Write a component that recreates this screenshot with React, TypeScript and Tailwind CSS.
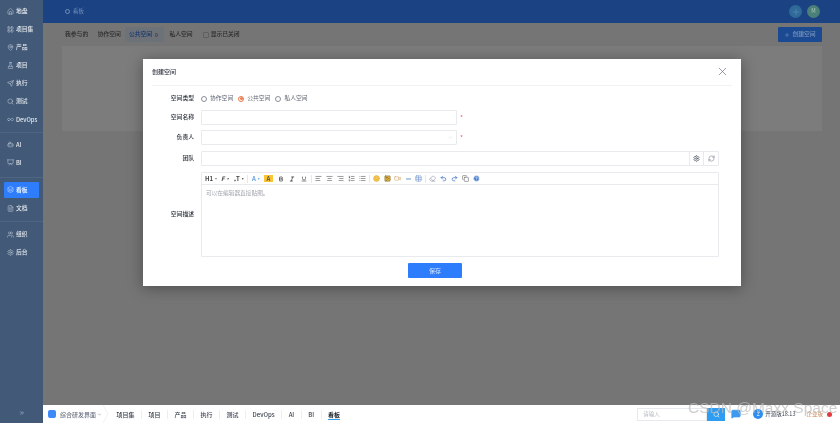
import React from "react";
import {
  Home, LayoutGrid, MapPin, FlaskConical, Send, Search, Infinity as InfinityIcon, Bot, Presentation, Layers, FileText, Users, Settings, ChevronsRight, Plus, X, RefreshCw, ChevronDown,
  AlignLeft, AlignCenter, AlignRight, ListOrdered, List, Smile, Image, Video, Minus, Table, Eraser, Undo2, Redo2, Copy, HelpCircle, Bold, Italic, Underline, MessageSquare,
} from "lucide-react";

const navGroups: { cls: string; items: [any, string][] }[] = [
  { cls: "pt-[3px] pb-[4px]", items: [[Home, "地盘"], [LayoutGrid, "项目集"], [MapPin, "产品"], [FlaskConical, "项目"], [Send, "执行"], [Search, "测试"], [InfinityIcon, "DevOps"]] },
  { cls: "border-t border-[#4f6683] pt-[4px] pb-[6px]", items: [[Bot, "AI"], [Presentation, "BI"]] },
  { cls: "border-t border-[#4f6683] pt-[4px] pb-[5px]", items: [[Layers, "看板"], [FileText, "文档"]] },
  { cls: "border-t border-[#4f6683] pt-[4px] pb-[5px]", items: [[Users, "组织"], [Settings, "后台"]] },
];

function Sidebar() {
  return (
    <aside className="flex w-[43px] shrink-0 flex-col bg-[#425a78] text-[#e4e9ef]">
      {navGroups.map((group, i) => (
        <div key={i} className={`flex flex-col gap-[2.15px] px-[4px] ${group.cls}`}>
          {group.items.map(([Icon, label]) => (
            <div key={label} className={`flex h-[16px] items-center gap-[2px] rounded-[1px] pl-[3px] text-[5.8px] font-medium ${label === "看板" ? "bg-[#2e7dfc] text-white" : ""}`}>
              <Icon size={7} strokeWidth={1.4} className="shrink-0" />
              <span className="whitespace-nowrap">{label}</span>
            </div>
          ))}
        </div>
      ))}
      <div className="mt-auto flex h-[20px] items-center justify-center text-[#c8d2de]">
        <ChevronsRight size={6} />
      </div>
    </aside>
  );
}

function TopArea() {
  return (
    <div className="flex min-h-0 flex-1 flex-col bg-[#757575]">
      <header className="flex h-[23px] shrink-0 items-center justify-between bg-[#1b4383] pl-[22px] pr-[20px] text-[5.5px] text-[#6f8fb8]">
        <span className="flex items-center gap-[3px]"><span className="h-[5px] w-[5px] rounded-full border border-[#6f8fb8]" />看板</span>
        <div className="flex items-center gap-[5px]">
          <div className="flex h-[13px] w-[13px] items-center justify-center rounded-full bg-[#2f6a98] text-[#5f97bd]"><Plus size={10} strokeWidth={1.3} /></div>
          <div className="flex h-[13px] w-[13px] items-center justify-center rounded-full bg-[#4a8078] text-[5.5px] text-[#a9c9bc]">M</div>
        </div>
      </header>
      <div className="flex h-[23px] shrink-0 items-center pl-[22px] pr-[18px] text-[5.8px] font-medium text-[#2a2a2a]">
        <span>我参与的</span>
        <span className="ml-[9.5px]">协作空间</span>
        <span className="ml-[4px] flex h-[15px] items-center gap-[3px] bg-[#6d7178] pl-[4px] pr-[6.5px] text-[#17366b]">公共空间 <span className="text-[5px] text-[#303030]">0</span></span>
        <span className="ml-[5px]">私人空间</span>
        <span className="ml-[10px] mr-[2px] h-[6px] w-[6px] rounded-[1px] border border-[#5f5f5f]" />
        <span>显示已关闭</span>
        <span className="ml-auto flex h-[15px] w-[44px] items-center justify-center gap-[2px] rounded-[1px] bg-[#1b4a92] text-[#7b95bb]"><Plus size={6} />创建空间</span>
      </div>
      <div className="ml-[19px] mr-[18px] h-[85px] shrink-0 bg-[#7c7c7c]" />
    </div>
  );
}

function BottomBar() {
  const items = ["项目集", "项目", "产品", "执行", "测试", "DevOps", "AI", "BI"];
  return (
    <footer className="flex h-[18px] shrink-0 items-center bg-white pl-[5px] text-[6px] font-medium text-[#3a4250]">
      <div className="flex h-[8px] w-[8px] items-center justify-center rounded-[2px] bg-[#3d8bfa]" />
      <span className="ml-[4px] text-[#6b7280]">综合研发界面</span>
      <ChevronDown size={5} className="ml-[1px] text-[#6b7280]" />
      <svg width="6" height="18" viewBox="0 0 6 18" className="ml-[1px]"><path d="M0 0 L5 9 L0 18" fill="none" stroke="#e8ebef" strokeWidth="0.7" /></svg>
      <div className="ml-[1px] flex items-center">
        {items.map((t, i) => (
          <span key={t} className={`px-[6.5px] ${i === 0 ? "" : "border-l border-[#eceef1]"}`}>{t}</span>
        ))}
        <span className="border-l border-[#eceef1] px-[6.5px]"><span className="border-b border-[#2e9cf0] font-bold text-[#20262e]">看板</span></span>
      </div>
      <div className="ml-auto flex items-center pr-[8px] font-normal">
        <div className="flex h-[13px] w-[70px] items-center border border-[#e6e9ee] pl-[5px] text-[5.5px] text-[#b5bac2]">请输入</div>
        <div className="flex h-[13px] w-[18px] items-center justify-center bg-[#2e9cf0] text-white"><Search size={7} /></div>
        <MessageSquare size={10} fill="#3d9af0" stroke="#3d9af0" className="ml-[6px]" />
        <div className="ml-[12px] flex h-[10px] w-[10px] items-center justify-center rounded-full bg-[#2e8ff0] text-[5px] text-white">Z</div>
        <span className="ml-[2px] text-[5.5px]">开源版18.13</span>
        <span className="ml-[11px] text-[5.5px] text-[#c98a5a]">企业版</span>
        <span className="ml-[4px] h-[5px] w-[5px] rounded-full bg-[#e23b3b]" />
      </div>
    </footer>
  );
}

const Tool = ({ children }: { children: React.ReactNode }) => <span className="flex h-[7px] w-[7px] items-center justify-center">{children}</span>;

function Toolbar() {
  const g1 = [AlignLeft, AlignCenter, AlignRight, ListOrdered, List];
  return (
    <div className="flex h-[12px] shrink-0 items-center border-b border-[#e8eaee] pl-[3px] text-[6px] font-bold text-[#444]">
      <span className="w-[16px]">H1<span className="font-normal">·</span></span>
      <span className="w-[13px] italic">F·</span>
      <span className="w-[13px]">₊T·</span>
      <span className="h-[8px] w-[5px] border-l border-[#e5e7eb]" />
      <span className="w-[12px] text-[#6ba3e0]">A·</span>
      <span className="flex h-[7px] w-[9px] items-center justify-center bg-[#fbc531] text-[#555]">A</span>
      <span className="ml-[4px] flex items-center gap-[4.5px]">
        <Tool><Bold size={6} strokeWidth={3} /></Tool><Tool><Italic size={6} strokeWidth={3} /></Tool><Tool><Underline size={6} strokeWidth={2.5} /></Tool>
      </span>
      <span className="ml-[4px] mr-[3px] h-[8px] border-l border-[#e5e7eb]" />
      <span className="flex items-center gap-[4px]">
        {g1.map((I, i) => <Tool key={i}><I size={7} strokeWidth={1.8} /></Tool>)}
      </span>
      <span className="mx-[3px] h-[8px] border-l border-[#e5e7eb]" />
      <span className="flex items-center gap-[3.5px]">
        <Tool><Smile size={7} color="#e2a52f" fill="#f5c95a" /></Tool>
        <Tool><Image size={7} color="#7a6a30" fill="#e8b23a" /></Tool>
        <Tool><Video size={7} color="#d9a76a" /></Tool>
        <Tool><Minus size={8} color="#6d93c9" strokeWidth={4} /></Tool>
        <Tool><Table size={7} color="#6d93c9" /></Tool>
      </span>
      <span className="mx-[3px] h-[8px] border-l border-[#e5e7eb]" />
      <span className="flex items-center gap-[4px]">
        <Tool><Eraser size={7} color="#8a94a6" /></Tool>
        <Tool><Undo2 size={7} color="#3d6fc4" strokeWidth={2.4} /></Tool>
        <Tool><Redo2 size={7} color="#3d6fc4" strokeWidth={2.4} /></Tool>
        <Tool><Copy size={7} color="#666" /></Tool>
        <Tool><HelpCircle size={7} color="#fff" fill="#4a7fd0" /></Tool>
      </span>
    </div>
  );
}

const Label = ({ children }: { children: React.ReactNode }) => <div className="w-[49px] shrink-0 pr-[7px] text-right text-[5.8px] font-medium text-[#2b323c]">{children}</div>;
const Radio = ({ label, on }: { label: string; on?: boolean }) => (
  <span className="flex items-center gap-[3px] text-[#5f6672]">
    <span className={`flex h-[6px] w-[6px] items-center justify-center rounded-full border ${on ? "border-[#f07a4a]" : "border-[#8a8f98]"}`}>
      {on && <span className="h-[3px] w-[3px] rounded-full bg-[#f07a4a]" />}
    </span>
    {label}
  </span>
);

function Modal() {
  return (
    <div className="absolute left-[143px] top-[59px] flex h-[227px] w-[598px] flex-col bg-white px-[9px] shadow-[0_2px_14px_rgba(0,0,0,0.35)]">
      <div className="flex h-[27px] shrink-0 items-center justify-between border-b border-[#f1f2f4] pb-[2px] text-[6px] font-medium text-[#2b323c]">
        <span>创建空间</span>
        <X size={13} strokeWidth={1.3} className="mr-[3px] text-[#6b7585]" />
      </div>
      <div className="mt-[7px] flex h-[11px] items-center">
        <Label>空间类型</Label>
        <div className="flex gap-[5px] text-[5.8px]">
          <Radio label="协作空间" />
          <Radio label="公共空间" on />
          <Radio label="私人空间" />
        </div>
      </div>
      <div className="mt-[6px] flex items-center">
        <Label>空间名称</Label>
        <div className="h-[15px] w-[256px] rounded-[1px] border border-[#e8eaee]" />
        <span className="ml-[3px] text-[6.5px] text-[#f0506e]">*</span>
      </div>
      <div className="mt-[5px] flex items-center">
        <Label>负责人</Label>
        <div className="flex h-[15px] w-[256px] items-center justify-end rounded-[1px] border border-[#e8eaee] pr-[3px] text-[#c4c8ce]"><ChevronDown size={5} /></div>
        <span className="ml-[3px] text-[6.5px] text-[#f0506e]">*</span>
      </div>
      <div className="mt-[6px] flex items-center">
        <Label>团队</Label>
        <div className="flex h-[15px] w-[518px] rounded-[1px] border border-[#e8eaee]">
          <div className="flex-1" />
          <div className="flex w-[14px] items-center justify-center border-l border-[#e8eaee] text-[#4a5262]"><Settings size={7} strokeWidth={2.4} /></div>
          <div className="flex w-[15px] items-center justify-center border-l border-[#e8eaee] text-[#7a8290]"><RefreshCw size={7} /></div>
        </div>
      </div>
      <div className="mt-[6px] flex items-center">
        <Label>空间描述</Label>
        <div className="flex h-[85px] w-[518px] flex-col rounded-[1px] border border-[#e8eaee]">
          <Toolbar />
          <div className="px-[4px] pt-[4px] text-[5.7px] text-[#a0a5ad]">可以在编辑器直接贴图。</div>
        </div>
      </div>
      <div className="mt-[6px] flex justify-center pr-[14px]">
        <div className="flex h-[15px] w-[54px] items-center justify-center rounded-[1px] bg-[#2e7dfc] text-[6px] text-[#d6e5ff]">保存</div>
      </div>
    </div>
  );
}

export default function App() {
  return (
    <div className="relative flex h-[423px] w-[840px] overflow-hidden bg-white blur-[0.25px]" style={{ fontFamily: '"Noto Sans CJK SC", "Liberation Sans", sans-serif' }}>
      <Sidebar />
      <main className="flex min-w-0 flex-1 flex-col">
        <TopArea />
        <BottomBar />
      </main>
      <Modal />
      <div className="absolute left-[688px] top-[398px] whitespace-nowrap text-[15.5px] leading-[20px] text-[#bbbbbb]/70" style={{ fontFamily: '"Liberation Sans", sans-serif' }}>CSDN @Maxx Space</div>
    </div>
  );
}
